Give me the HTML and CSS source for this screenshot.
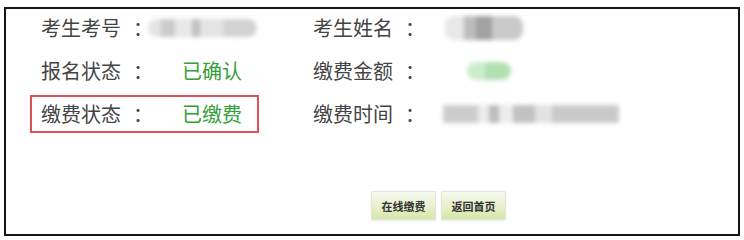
FILE: index.html
```html
<!DOCTYPE html>
<html lang="zh-CN">
<head>
<meta charset="utf-8">
<link rel="stylesheet" href="styles.css">
</head>
<body>
<div class="panel">
  <div class="rows">
    <div class="row">
      <div class="cell">
        <span class="label">考生考号<span class="colon">：</span></span>
        <span class="blur blur-id"></span>
      </div>
      <div class="cell2">
        <span class="label2">考生姓名<span class="colon">：</span></span>
        <span class="blur blur-name"></span>
      </div>
    </div>
    <div class="row">
      <div class="cell">
        <span class="label">报名状态<span class="colon">：</span></span>
        <span class="value">已确认</span>
      </div>
      <div class="cell2">
        <span class="label2">缴费金额<span class="colon">：</span></span>
        <span class="blur blur-amount"></span>
      </div>
    </div>
    <div class="row">
      <div class="cell highlight">
        <span class="label">缴费状态<span class="colon">：</span></span>
        <span class="value">已缴费</span>
      </div>
      <div class="cell2">
        <span class="label2">缴费时间<span class="colon">：</span></span>
        <span class="blur blur-time"></span>
      </div>
    </div>
  </div>
  <div class="actions">
    <button class="btn">在线缴费</button>
    <button class="btn">返回首页</button>
  </div>
</div>
</body>
</html>
```
FILE: styles.css
```css
* { box-sizing: border-box; }
html, body { margin: 0; padding: 0; background: #fff; }
body {
  font-family: "Noto Sans CJK SC", "Noto Sans", sans-serif;
  color: #444;
}
.panel {
  margin: 7px 4px 0 4px;
  width: 736px;
  height: 229px;
  border: 2px solid #151515;
}
.rows {
  display: flex;
  flex-direction: column;
  gap: 5px;
  padding-left: 24px;
}
.row {
  display: flex;
  align-items: center;
  height: 38px;
}
.cell {
  display: flex;
  align-items: center;
  width: 229px;
  height: 38px;
  border: 2px solid transparent;
  padding-left: 9px;
}
.cell.highlight { border-color: #d9535a; }
.label {
  width: 141px;
  font-size: 20px;
  line-height: 1;
  flex: none;
  white-space: nowrap;
}
.label2 {
  width: 130px;
  font-size: 20px;
  line-height: 1;
  flex: none;
  white-space: nowrap;
}
.colon { margin-left: 12px; }
.cell2 {
  display: flex;
  align-items: center;
  margin-left: 54px;
  height: 38px;
}
.value {
  font-size: 20px;
  line-height: 1;
  color: #33a036;
}
.blur {
  display: block;
  height: 18px;
  filter: blur(2px);
  border-radius: 9px;
}
.blur-id {
  width: 134px;
  margin-left: -34px;
  background: linear-gradient(90deg, #e4e4e4 0 12%, #cbcbcb 12% 25%, #e8e8e8 25% 40%, #c2c2c2 40% 48%, #e4e4e4 48% 70%, #d2d2d2 70% 100%);
}
.blur-name {
  width: 78px;
  height: 24px;
  margin-left: 2px;
  background: linear-gradient(90deg, #e8e8e8 0 25%, #bcbcbc 25% 40%, #a2a2a2 40% 60%, #cacaca 60% 100%);
}
.blur-amount {
  width: 44px;
  height: 18px;
  margin-left: 24px;
  background: linear-gradient(90deg, #cdeccd 0 40%, #b3e0b3 40% 100%);
}
.blur-time {
  width: 176px;
  margin-left: 0;
  border-radius: 2px;
  background: linear-gradient(90deg, #cdcdcd 0 20%, #ececec 20% 26%, #bdbdbd 26% 32%, #ececec 32% 40%, #c2c2c2 40% 52%, #e2e2e2 52% 62%, #cacaca 62% 100%);
}
.actions {
  display: flex;
  gap: 5px;
  margin-top: 58px;
  padding-left: 365px;
}
.btn {
  width: 65px;
  height: 29px;
  padding: 0;
  font-family: "Noto Sans CJK SC", sans-serif;
  font-size: 11px;
  font-weight: bold;
  color: #333;
  border: 1px solid #e2e6d6;
  border-radius: 1px;
  background: linear-gradient(180deg, #f7f9ee 0%, #e8f0cd 55%, #d6e6a8 100%);
  box-shadow: 0 1px 2px rgba(0,0,0,0.08);
}
```
